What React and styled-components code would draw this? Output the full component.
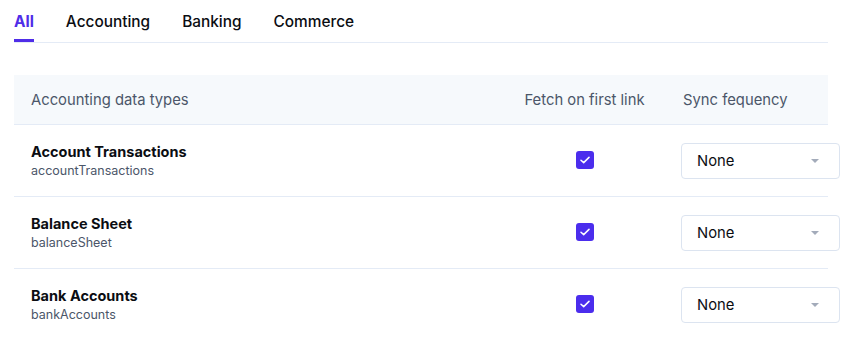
import React, { useState } from "react";
import styled, { createGlobalStyle } from "styled-components";

const GlobalStyle = createGlobalStyle`
  body {
    margin: 0;
    background: #ffffff;
    font-family: "Inter", "Noto Sans", sans-serif;
    color: #0b0d12;
  }
`;

const Page = styled.div`
  width: 814px;
  padding: 0 0 0 14px;
`;

/* ---------------------------------- tabs ---------------------------------- */

const TabBar = styled.div`
  display: flex;
  gap: 32px;
  height: 42px;
  border-bottom: 1px solid #e4ebf6;
`;

const Tab = styled.button`
  all: unset;
  cursor: pointer;
  height: 42px;
  display: flex;
  align-items: flex-start;
  padding-top: 12px;
  box-sizing: border-box;
  font-size: 15.4px;
  font-weight: ${({ $active }) => ($active ? 700 : 500)};
  color: ${({ $active }) => ($active ? "#4f2de8" : "#0b0d12")};
  border-bottom: 3px solid ${({ $active }) => ($active ? "#4f2de8" : "transparent")};
  margin-bottom: -1px;
`;

/* ---------------------------------- table --------------------------------- */

const Table = styled.div`
  margin-top: 32px;
  display: grid;
  grid-template-columns: 489px 163px 162px;
`;

const HeadCell = styled.div`
  height: 49px;
  display: flex;
  align-items: center;
  justify-content: ${({ $center }) => ($center ? "center" : "flex-start")};
  padding-left: ${({ $center }) => ($center ? "0" : "17px")};
  background: #f6f9fc;
  border-bottom: 1px solid #e4ebf6;
  font-size: 14.8px;
  color: #4b5669;
`;

const Cell = styled.div`
  height: 71px;
  display: flex;
  align-items: center;
  justify-content: ${({ $center }) => ($center ? "center" : "flex-start")};
  padding-left: ${({ $pad }) => $pad || "0"};
  border-bottom: ${({ $last }) => ($last ? "none" : "1px solid #e4ebf6")};
`;

const NameBlock = styled.div`
  display: flex;
  flex-direction: column;
  gap: 3px;
`;

const Title = styled.span`
  font-size: 14.5px;
  font-weight: 700;
  color: #0b0d12;
`;

const Key = styled.span`
  font-size: 12.5px;
  color: #4b5669;
`;

const Check = styled.span`
  width: 18px;
  height: 18px;
  border-radius: 3px;
  background: #4b2ded;
  display: flex;
  align-items: center;
  justify-content: center;
  margin-top: -2px;
`;

const Select = styled.div`
  flex: 0 0 159px;
  width: 159px;
  height: 36px;
  box-sizing: border-box;
  margin-left: 15px;
  border: 1px solid #dce4f0;
  border-radius: 4px;
  background: #fff;
  display: flex;
  align-items: center;
  justify-content: space-between;
  padding: 0 20px 0 15px;
  font-size: 14.8px;
  color: #0b0d12;
`;

const Caret = styled.span`
  width: 0;
  height: 0;
  border-left: 4px solid transparent;
  border-right: 4px solid transparent;
  border-top: 4px solid #a3abba;
`;

const tabs = ["All", "Accounting", "Banking", "Commerce"];

const rows = [
  { name: "Account Transactions", key: "accountTransactions" },
  { name: "Balance Sheet", key: "balanceSheet" },
  { name: "Bank Accounts", key: "bankAccounts" },
];

export default function App() {
  const [active, setActive] = useState("All");

  return (
    <Page>
      <GlobalStyle />
      <TabBar>
        {tabs.map((t) => (
          <Tab key={t} $active={t === active} onClick={() => setActive(t)}>
            {t}
          </Tab>
        ))}
      </TabBar>
      <Table>
        <HeadCell>Accounting data types</HeadCell>
        <HeadCell $center>Fetch on first link</HeadCell>
        <HeadCell>Sync fequency</HeadCell>
        {rows.map((r, i) => {
          const last = i === rows.length - 1;
          return (
            <React.Fragment key={r.key}>
              <Cell $pad="17px" $last={last}>
                <NameBlock>
                  <Title>{r.name}</Title>
                  <Key>{r.key}</Key>
                </NameBlock>
              </Cell>
              <Cell $center $last={last}>
                <Check>
                  <svg width="10" height="8" viewBox="0 0 10 8">
                    <path
                      d="M1 4.2 L3.7 6.6 L9 1.4"
                      fill="none"
                      stroke="#fff"
                      strokeWidth="1.5"
                      strokeLinecap="round"
                      strokeLinejoin="round"
                    />
                  </svg>
                </Check>
              </Cell>
              <Cell $last={last}>
                <Select>
                  None
                  <Caret />
                </Select>
              </Cell>
            </React.Fragment>
          );
        })}
      </Table>
    </Page>
  );
}
